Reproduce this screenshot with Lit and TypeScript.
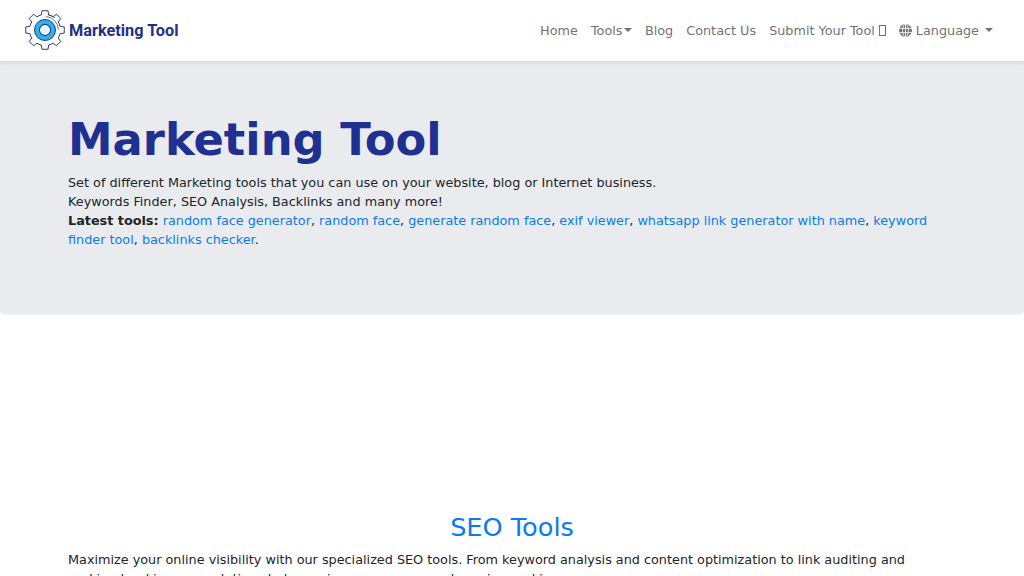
import { LitElement, html, css, svg } from "lit";
import { customElement } from "lit/decorators.js";

function gearPath(cx: number, cy: number, teeth: number, outer: number, root: number): string {
  const step = (Math.PI * 2) / teeth;
  const pts: string[] = [];
  for (let i = 0; i < teeth; i++) {
    const a = -Math.PI / 2 + i * step;
    const w1 = step * 0.3;
    const w2 = step * 0.2;
    const p = (r: number, t: number) => `${(cx + r * Math.cos(t)).toFixed(2)} ${(cy + r * Math.sin(t)).toFixed(2)}`;
    pts.push(`${i === 0 ? "M" : "L"}${p(root, a - w1)}`);
    pts.push(`L${p(outer, a - w2)}`);
    pts.push(`L${p(outer, a + w2)}`);
    pts.push(`L${p(root, a + w1)}`);
    pts.push(`A${root} ${root} 0 0 1 ${p(root, a + step - w1)}`);
  }
  return pts.join("") + "Z";
}

@customElement("app-root")
export class AppRoot extends LitElement {
  static styles = css`
    :host {
      display: block;
      height: 576px;
      overflow: hidden;
      background: #fff;
      font-family: "DejaVu Sans", sans-serif;
      font-size: 12.8px;
      line-height: 19px;
      color: #212529;
    }
    .nav {
      position: relative;
      z-index: 1;
      height: 61px;
      box-sizing: border-box;
      display: flex;
      align-items: center;
      justify-content: space-between;
      padding: 0 31px 1px 25px;
      background: #fff;
      box-shadow: 0 2px 4px rgba(0, 0, 0, 0.08);
    }
    .brand { display: flex; align-items: center; gap: 4px; }
    .brand svg { display: block; }
    .brand-text {
      font-family: Roboto, sans-serif;
      font-weight: 700;
      font-size: 16.3px;
      color: #1f3085;
      white-space: nowrap;
    }
    .links { display: flex; align-items: center; gap: 13px; color: #737373; }
    .item { display: flex; align-items: center; white-space: nowrap; }
    .caret {
      width: 0;
      height: 0;
      margin-left: 1.5px;
      border-top: 4px solid #737373;
      border-left: 4px solid transparent;
      border-right: 4px solid transparent;
    }
    .lang svg { margin-right: 4px; }
    .lang .caret { margin-left: 6px; }
    .tofu {
      width: 7px;
      height: 11px;
      margin-left: 4px;
      border: 1px solid #737373;
      box-sizing: border-box;
    }
    .hero {
      height: 253px;
      box-sizing: border-box;
      padding: 49px 68px 0;
      background: #e9ebef;
      border-radius: 0 0 4px 4px;
      box-shadow: 0 1px 2px rgba(0, 0, 0, 0.05);
    }
    h1 {
      margin: 0 0 3px;
      font-size: 44.8px;
      line-height: 60px;
      font-weight: 700;
      color: #1f3090;
    }
    p { margin: 0; }
    a { color: #0b7bec; text-decoration: none; }
    .spacer { height: 195px; }
    h2 {
      margin: 0 0 5px;
      text-align: center;
      font-weight: 400;
      font-size: 25.6px;
      line-height: 36px;
      color: #0b7bec;
    }
    .section { padding: 0 68px; }
  `;

  render() {
    return html`
      <div class="nav">
        <div class="brand">
          <svg width="40" height="42" viewBox="0 0 40 42" fill="none">
            ${svg`<path fill="#fff" stroke="#2f3b80" stroke-width="1" stroke-linejoin="round" d=${gearPath(20, 21, 8, 19.5, 15.5)} />`}
            <path stroke="#2f3b80" stroke-width="0.7" d="M21 7.6a13.4 13.4 0 0 1 12.4 13M23 5.8a15.2 15.2 0 0 1 7 3" />
            <circle cx="20" cy="21" r="10.5" fill="#29b5ec" stroke="#2f3b80" stroke-width="1" />
            <circle cx="20" cy="21" r="5.6" fill="#e4f6fd" stroke="#2f3b80" stroke-width="1.1" />
          </svg>
          <span class="brand-text">Marketing Tool</span>
        </div>
        <div class="links">
          <span class="item">Home</span>
          <span class="item">Tools<i class="caret"></i></span>
          <span class="item">Blog</span>
          <span class="item">Contact Us</span>
          <span class="item">Submit Your Tool<i class="tofu"></i></span>
          <span class="item lang">
            <svg width="13" height="13" viewBox="0 0 13 13" fill="none">
              <circle cx="6.5" cy="6.5" r="6.5" fill="#737373" />
              <ellipse cx="6.5" cy="6.5" rx="2.9" ry="6.5" stroke="#fff" stroke-width="0.8" />
              <path stroke="#fff" stroke-width="0.8" d="M0 4.4h13M0 8.6h13M6.5 0v13" />
            </svg>
            Language<i class="caret"></i>
          </span>
        </div>
      </div>
      <div class="hero">
        <h1>Marketing Tool</h1>
        <p>Set of different Marketing tools that you can use on your website, blog or Internet business.</p>
        <p>Keywords Finder, SEO Analysis, Backlinks and many more!</p>
        <p>
          <b>Latest tools:</b>
          <a>random face generator</a>, <a>random face</a>, <a>generate random face</a>, <a>exif viewer</a>,
          <a>whatsapp link generator with name</a>, <a>keyword finder tool</a>, <a>backlinks checker</a>.
        </p>
      </div>
      <div class="spacer"></div>
      <div class="section">
        <h2>SEO Tools</h2>
        <p>
          Maximize your online visibility with our specialized SEO tools. From keyword analysis and content optimization to link auditing and
          ranking tracking, our solutions help you improve your search engine rankings.
        </p>
      </div>
    `;
  }
}
